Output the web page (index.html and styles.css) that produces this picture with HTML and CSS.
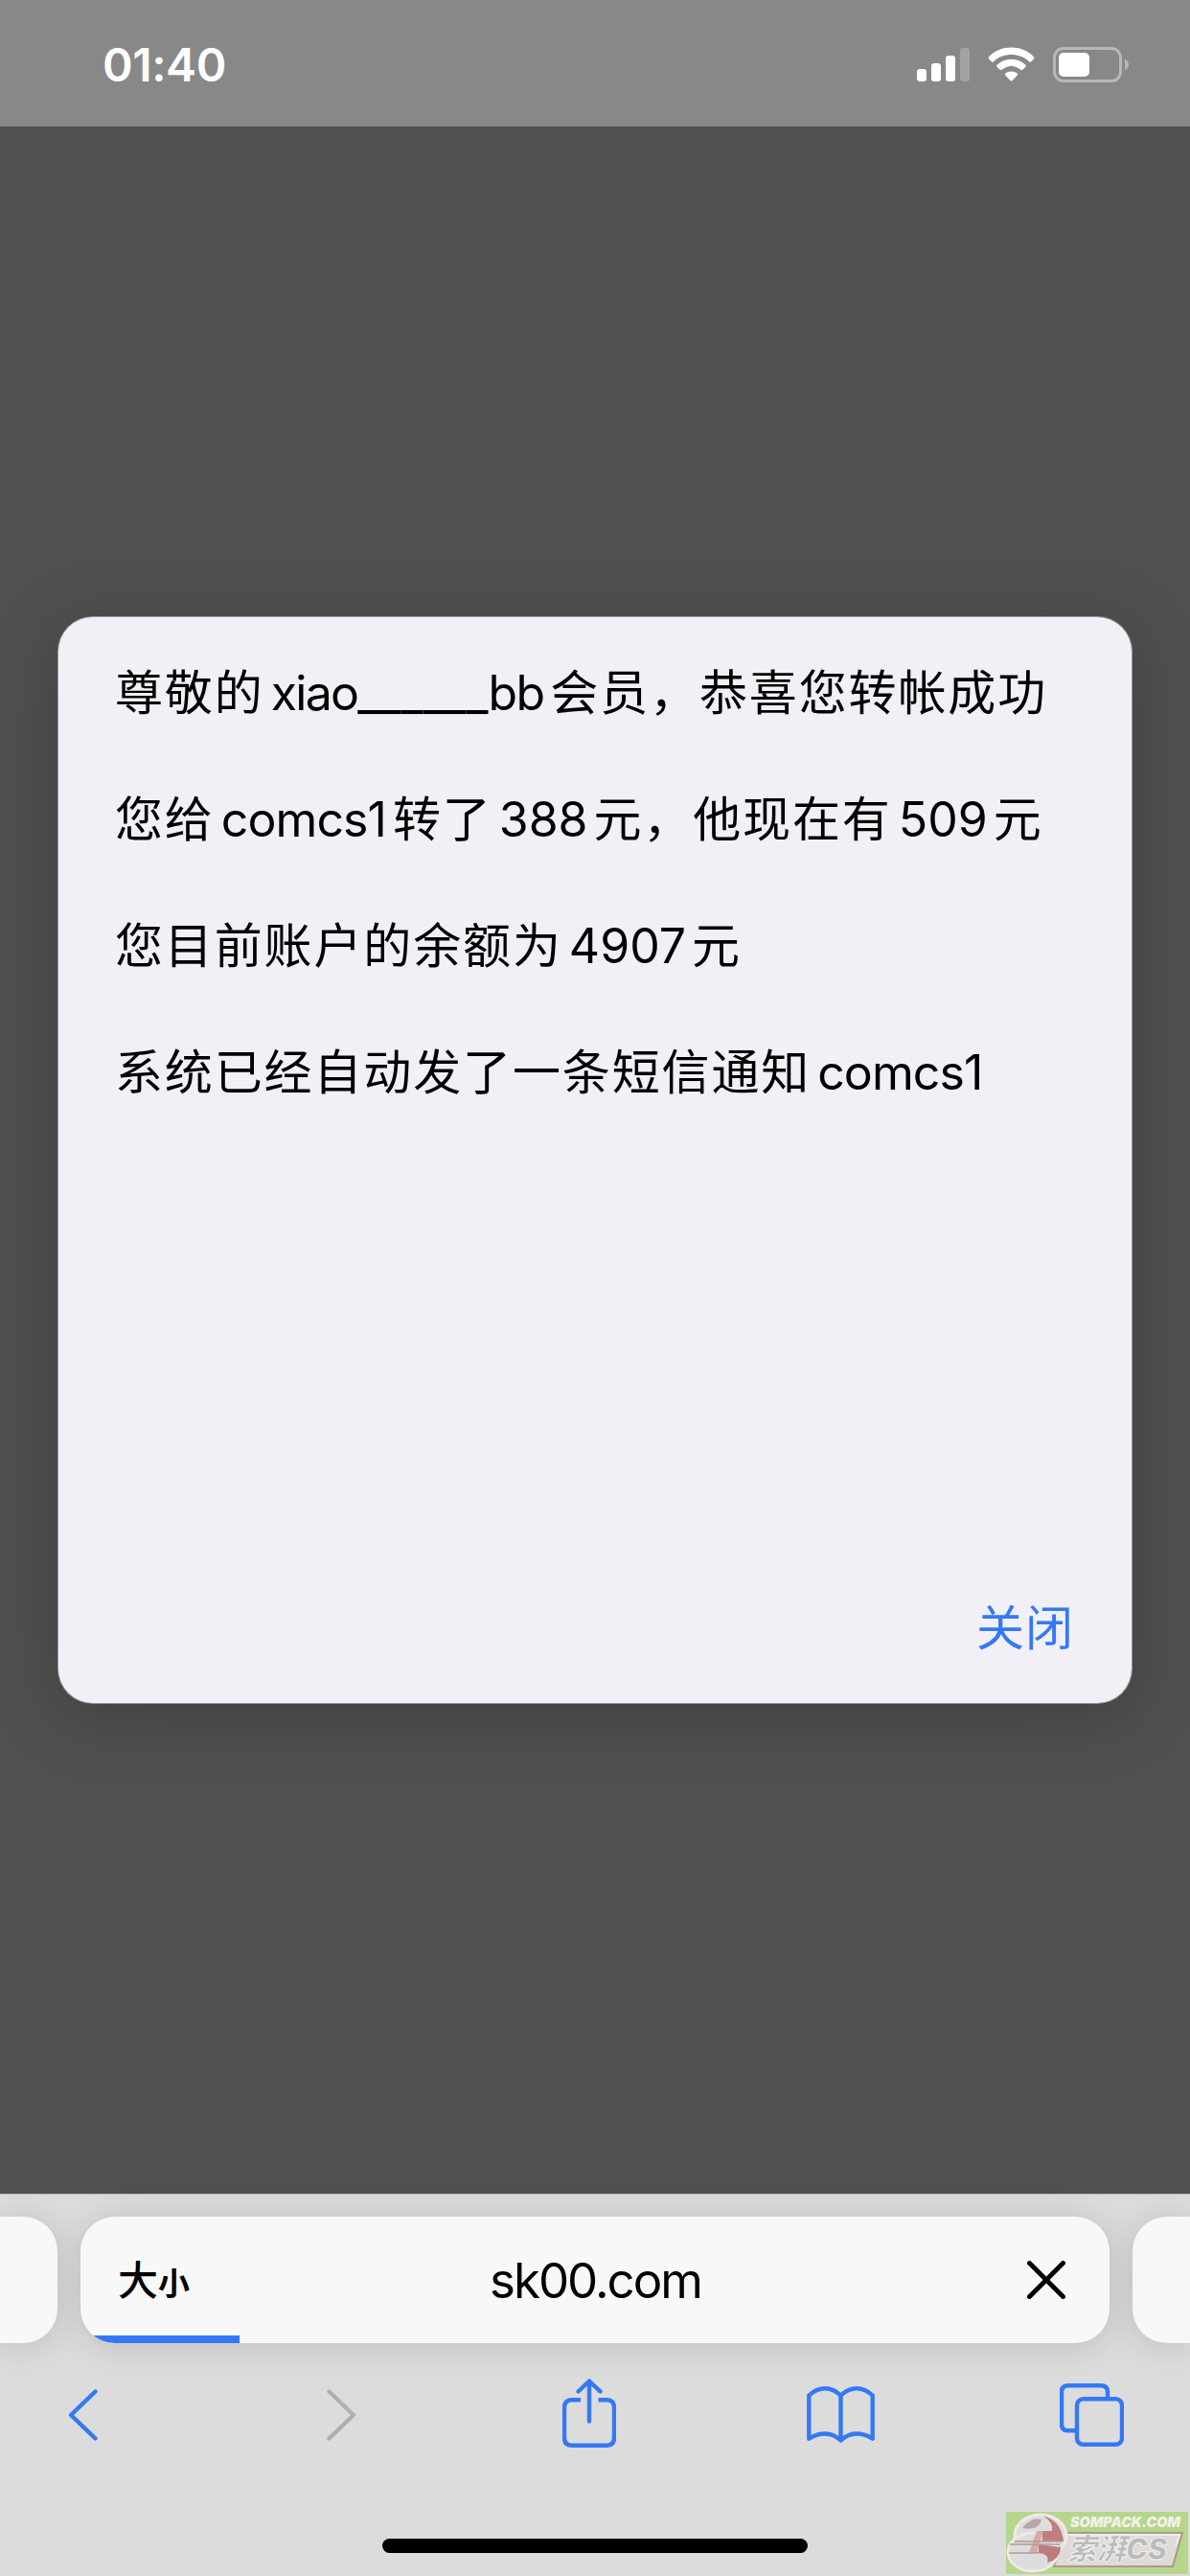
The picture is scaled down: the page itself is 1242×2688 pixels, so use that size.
FILE: index.html
```html
<!DOCTYPE html>
<html lang="zh-CN">
<head>
    <meta charset="UTF-8">
    <meta name="viewport" content="width=device-width, initial-scale=1.0">
    <title>转帐成功</title>
    <link rel="stylesheet" href="styles.css">
</head>
<body>
    <div class="screen">
        <!-- 状态栏 -->
        <header class="status-bar">
            <span class="time">01:40</span>
            <svg class="status-icons" width="222" height="38" viewBox="0 0 222 38">
                <g fill="#fff">
                    <rect x="0" y="23" width="10" height="13" rx="3"/>
                    <rect x="15" y="17" width="10" height="19" rx="3"/>
                    <rect x="30" y="9" width="10" height="27" rx="3"/>
                    <rect x="45" y="1" width="10" height="35" rx="3" opacity=".22"/>
                    <path d="M75.2 10.2C87-2.6 110-2.6 121.8 10.2Q123 11.500 121.800 12.700L119 15.400Q118 16.200 117 15.200C107 5.500 90 5.500 80 15.200Q79 16.200 78 15.400L75.200 12.700Q74 11.500 75.200 10.200Z"/>
                    <path d="M83.500 18.800C91.500 10.800 105.500 10.800 113.500 18.800Q114.400 19.800 113.500 20.700L110.300 23.700Q109.300 24.600 108.300 23.700C102.500 18.600 94.500 18.600 88.700 23.700Q87.700 24.600 86.700 23.700L83.500 20.700Q82.600 19.800 83.500 18.800Z"/>
                    <path d="M92.300 27.600C95.500 24.700 101.500 24.700 104.700 27.600Q105.700 28.500 104.800 29.500L99.300 35.200Q98.500 36 97.700 35.200L92.200 29.500Q91.300 28.500 92.300 27.600Z"/>
                    <rect x="148" y="6" width="32" height="25" rx="5"/>
                </g>
                <rect x="143.500" y="1.500" width="69" height="34" rx="9.500" fill="none" stroke="#b8b8b8" stroke-width="3"/>
                <path d="M217 12.500Q221 15 221 18.500T217 24.500Z" fill="#b8b8b8"/>
            </svg>
        </header>

        <!-- 弹窗 -->
        <main class="page">
            <div class="dialog">
                <div class="message">
                    <p>尊敬的<span class="latin name">xiao<span class="blank">______</span>bb</span>会员，恭喜您转帐成功</p>
                    <p>您给<span class="latin">comcs1</span>转了<span class="latin num">388</span>元，他现在有<span class="latin num">509</span>元</p>
                    <p>您目前账户的余额为<span class="latin num">4907</span>元</p>
                    <p>系统已经自动发了一条短信通知<span class="latin">comcs1</span></p>
                </div>
                <button class="close-btn" type="button">关闭</button>
            </div>
        </main>

        <!-- 浏览器底栏 -->
        <footer class="browser">
            <div class="tabs">
                <div class="tab tab-prev"></div>
                <div class="tab tab-current">
                    <span class="text-size"><span class="big">大</span><span class="small">小</span></span>
                    <span class="url">sk00.com</span>
                    <svg width="40" height="40" viewBox="0 0 40 40">
                        <path d="M2.500 2.500L37.500 37.500M37.500 2.500L2.500 37.500" fill="none" stroke="#000" stroke-width="4.800" stroke-linecap="round"/>
                    </svg>
                    <div class="progress"></div>
                </div>
                <div class="tab tab-next"></div>
            </div>
            <nav class="toolbar">
                <svg class="back" width="31" height="54" viewBox="0 0 31 54">
                    <path d="M28.500 2.500L3 27L28.500 51.500"/>
                </svg>
                <svg class="forward" width="31" height="54" viewBox="0 0 31 54">
                    <path d="M2.500 2.500L28 27L2.500 51.500"/>
                </svg>
                <svg class="share" width="56" height="72" viewBox="0 0 56 72">
                    <path d="M28 44.500V2.500M16.500 13.500L28 2.500L39.500 13.500"/>
                    <path class="butt" d="M19 22.300H10Q2 22.300 2 30.300V61.800Q2 69.800 10 69.800H46Q54 69.800 54 61.800V30.300Q54 22.300 46 22.300H37.500"/>
                </svg>
                <svg class="book" width="71" height="60" viewBox="0 0 71 60">
                    <path d="M35.500 56.500V9.500Q28 2.200 19 2.200T2.300 9.500V54.700Q10 49.500 19 49.500T35.500 56.500Q43 49.500 52 49.500T68.700 54.700V9.500Q61 2.200 52 2.200T35.500 9.500"/>
                </svg>
                <svg class="windows" width="67" height="66" viewBox="0 0 67 66">
                    <rect x="18" y="16.200" width="47" height="47.600" rx="6.500"/>
                    <path class="butt" d="M50 16V9Q50 2.200 43 2.200H9Q2 2.200 2 9V42.500Q2 49.300 9 49.300H18"/>
                </svg>
            </nav>
            <div class="home-indicator"></div>
        </footer>

        <!-- 右下角水印 -->
        <svg class="watermark" width="190" height="65" viewBox="0 0 190 65">
            <rect width="190" height="65" fill="#b5d68b"/>
            <path d="M62 22H184L174 57H50Z" fill="#dedad8" stroke="#a99b88" stroke-width="2"/>
            <path d="M62 24H181L177 35" fill="none" stroke="#eee" stroke-width="2"/>
            <ellipse cx="36" cy="25" rx="27" ry="22" fill="#ddd" stroke="#efe9e7" stroke-width="3"/>
            <ellipse cx="28" cy="42" rx="26" ry="20" fill="#ddd" stroke="#efe9e7" stroke-width="3"/>
            <path d="M17 17Q26 5 37 8Q35 20 17 17Z" fill="#b7a6a3"/>
            <path d="M39 4Q58 10 60 31H38V20H48Q50 12 39 4Z" fill="#c07e7e"/>
            <path d="M34 34L57 37Q56 50 43 53Q46 44 34 43Z" fill="#bd7c7c"/>
            <path d="M32 20H39L32 43H24Z" fill="#d8aaa7"/>
            <path d="M9 31H58M4 34H56M3 43H34" stroke="#b49b98" stroke-width="1.500"/>
            <text class="mark-url" x="67" y="16" textLength="115" lengthAdjust="spacingAndGlyphs">SOMPACK.COM</text>
            <text class="mark-name" x="64" y="50" textLength="104" lengthAdjust="spacingAndGlyphs">索湃CS</text>
        </svg>
    </div>
</body>
</html>
```
FILE: styles.css
```css
* {
    box-sizing: border-box;
}
body {
    margin: 0;
    background-color: #505050;
    font-family: Inter, "Noto Sans CJK SC", sans-serif;
    color: #000;
}
.screen {
    position: relative;
    display: flex;
    flex-direction: column;
    width: 1242px;
    height: 2688px;
    overflow: hidden;
}

/* 状态栏 */
.status-bar {
    display: flex;
    justify-content: space-between;
    height: 132px;
    padding: 49px 63px 0 107px;
    background-color: #888;
}
.time {
    font-size: 48px;
    font-weight: 600;
    line-height: 38px;
    letter-spacing: -0.4px;
    color: #fff;
}

/* 弹窗 */
.page {
    flex: 1;
    padding: 512px 61px 0;
}
.dialog {
    display: flex;
    flex-direction: column;
    justify-content: space-between;
    height: 1133px;
    padding: 9px 60px 49px 59px;
    border-radius: 36px;
    background-color: #f1f0f6;
    box-shadow: 0 0 0 1px #999, 0 12px 75px rgba(0, 0, 0, 0.22);
}
.message p {
    margin: 0;
    font-family: "Noto Sans CJK SC", sans-serif;
    font-size: 50px;
    font-weight: 400;
    line-height: 132px;
    letter-spacing: 1.87px;
    white-space: nowrap;
}
.latin {
    margin: 0 7px 0 7px;
    font-family: Inter, sans-serif;
    line-height: 1;
    letter-spacing: -0.9px;
}
.name {
    letter-spacing: -1.7px;
}
.num {
    margin-right: 6px;
    letter-spacing: 0;
}
.blank {
    letter-spacing: -0.1px;
}
.close-btn {
    align-self: flex-end;
    padding: 0;
    border: none;
    background: none;
    font-family: "Noto Sans CJK SC", sans-serif;
    font-size: 50px;
    font-weight: 400;
    line-height: 66px;
    letter-spacing: 1px;
    color: #3478f6;
}

/* 底栏 */
.browser {
    height: 399px;
    border-top: 1px solid #b5b5b5;
    background-color: #dcdcdc;
}
.tabs {
    display: flex;
    gap: 24px;
    padding-top: 23px;
}
.tab {
    height: 132px;
    background-color: #f8f8f8;
    box-shadow: 0 3px 36px rgba(0, 0, 0, 0.14);
}
.tab-prev {
    width: 60px;
    border-radius: 0 36px 36px 0;
}
.tab-next {
    width: 60px;
    border-radius: 36px 0 0 36px;
}
.tab-current {
    position: relative;
    display: flex;
    align-items: center;
    justify-content: space-between;
    width: 1074px;
    padding: 0 46px 0 39px;
    border-radius: 36px;
    overflow: hidden;
}
.text-size {
    width: 78px;
    padding-bottom: 6px;
    font-family: "Noto Sans CJK SC", sans-serif;
    font-weight: 500;
    white-space: nowrap;
}
.big {
    font-size: 42px;
}
.small {
    font-size: 33px;
    font-weight: 700;
}
.url {
    margin-right: 30px;
    font-size: 51px;
    letter-spacing: -2px;
}
.progress {
    position: absolute;
    left: 0;
    bottom: 0;
    width: 166px;
    height: 8px;
    background-color: #3478f6;
}
.toolbar {
    display: flex;
    align-items: center;
    height: 146px;
    padding: 4px 0 0 71px;
}
.toolbar svg {
    flex: none;
    fill: none;
    stroke: #3478f6;
    stroke-width: 4.4;
    stroke-linecap: round;
    stroke-linejoin: round;
}
.toolbar .butt {
    stroke-linecap: butt;
}
.toolbar .forward {
    margin-left: 239px;
    stroke: #b0b0b0;
}
.toolbar .share {
    margin: -4px 0 0 215px;
}
.toolbar .book {
    margin-left: 199px;
}
.toolbar .windows {
    margin-left: 193px;
}
.home-indicator {
    width: 444px;
    height: 15px;
    margin: 58px auto 0;
    border-radius: 8px;
    background-color: #000;
}

/* 水印 */
.watermark {
    position: absolute;
    right: 2px;
    bottom: 2px;
}
.mark-url {
    font: italic 900 14px Inter, sans-serif;
    fill: #f1f1e9;
}
.mark-name {
    font: italic 900 31px Inter, "Noto Sans CJK SC", sans-serif;
    fill: #bbb;
    stroke: #f0f0f0;
    stroke-width: 1;
}
```
